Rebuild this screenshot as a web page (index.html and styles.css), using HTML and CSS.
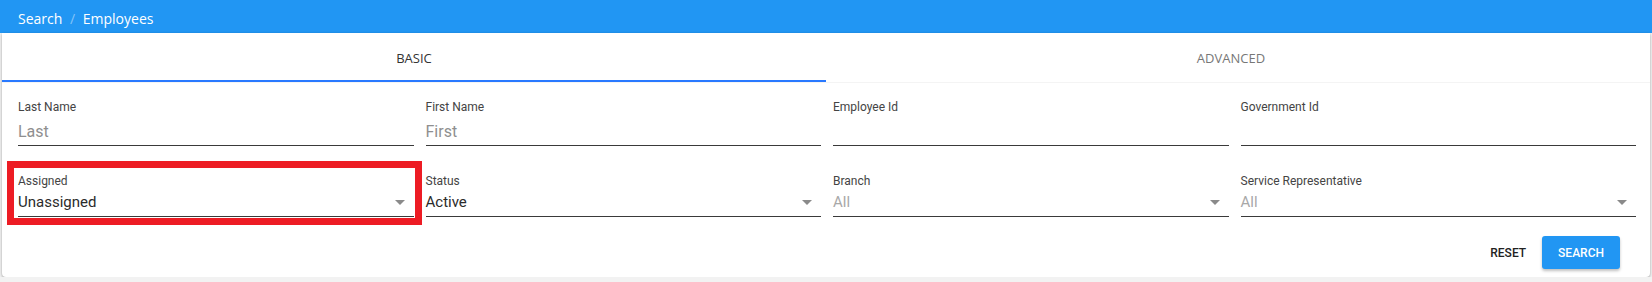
FILE: index.html
```html
<!DOCTYPE html>
<html lang="en">
<head>
    <meta charset="UTF-8" />
    <title>Search Employees</title>
    <link rel="stylesheet" href="styles.css">
</head>
<body>

<!-- breadcrumb bar -->
<div class="topbar">
    <span class="crumb">Search</span>
    <span class="sep">/</span>
    <span class="crumb">Employees</span>
</div>

<div class="card">
    <!-- tabs -->
    <div class="tabs">
        <div class="tab active">BASIC</div>
        <div class="tab">ADVANCED</div>
    </div>

    <!-- search form -->
    <div class="form">
        <div class="field text">
            <label>Last Name</label>
            <div class="value placeholder">Last</div>
        </div>
        <div class="field text">
            <label>First Name</label>
            <div class="value placeholder">First</div>
        </div>
        <div class="field text">
            <label>Employee Id</label>
            <div class="value"></div>
        </div>
        <div class="field text">
            <label>Government Id</label>
            <div class="value"></div>
        </div>

        <div class="field select">
            <span class="highlight"></span>
            <label>Assigned</label>
            <div class="value">Unassigned<span class="arrow"></span></div>
        </div>
        <div class="field select">
            <label>Status</label>
            <div class="value">Active<span class="arrow"></span></div>
        </div>
        <div class="field select">
            <label>Branch</label>
            <div class="value muted">All<span class="arrow"></span></div>
        </div>
        <div class="field select">
            <label>Service Representative</label>
            <div class="value muted">All<span class="arrow"></span></div>
        </div>
    </div>

    <div class="actions">
        <button class="btn flat">RESET</button>
        <button class="btn raised">SEARCH</button>
    </div>
</div>

</body>
</html>
```

FILE: styles.css
```css
body {
    margin: 0;
    background: #f2f2f2;
    font-family: Roboto, 'Liberation Sans', sans-serif;
    color: #212121;
}

.topbar {
    height: 33px;
    line-height: 33px;
    padding: 2px 0 0 18px;
    box-sizing: border-box;
    background: #2196f3;
    color: #fff;
    font-family: 'Open Sans', sans-serif;
    font-size: 14px;
}

.sep {
    color: rgba(255, 255, 255, 0.45);
    margin: 0 4px;
}

.card {
    margin: 0 2px;
    background: #fff;
    border-radius: 0 0 4px 4px;
    box-shadow: 0 1px 3px rgba(0, 0, 0, 0.35);
    padding-bottom: 8px;
}

.tabs {
    display: flex;
    padding-right: 14px;
    border-bottom: 1px solid #f4f4f4;
}

.tab {
    flex: 1;
    height: 49px;
    line-height: 50px;
    text-align: center;
    font-family: 'Open Sans', sans-serif;
    font-size: 13px;
    color: #777;
    border-bottom: 2px solid transparent;
    box-sizing: border-box;
}

.tab.active {
    flex: 0 0 824px;
    color: #333;
    border-bottom-color: #2979ff;
}

.form {
    display: grid;
    grid-template-columns: repeat(4, 1fr);
    column-gap: 12px;
    row-gap: 27px;
    padding: 16px 14px 0 16px;
    align-items: start;
}

.field {
    position: relative;
    border-bottom: 1px solid #3a3a3a;
}

.field label {
    display: block;
    font-size: 12px;
    line-height: 16px;
    color: #444;
}

.field .value {
    position: relative;
    height: 24px;
    line-height: 24px;
}

.field.text .value {
    margin-top: 5px;
    padding-bottom: 1px;
    font-size: 16px;
}

.field.select .value {
    margin-top: 1px;
    padding-bottom: 2px;
    font-size: 15px;
    color: #2b2b2b;
}

.field .value.placeholder {
    color: #8f8f8f;
}

.field .value.muted {
    color: #a8a8a8;
}

.arrow {
    position: absolute;
    right: 9px;
    top: 10px;
    border-left: 5px solid transparent;
    border-right: 5px solid transparent;
    border-top: 5px solid #8a8a8a;
}

/* red annotation round the Assigned field */
.highlight {
    position: absolute;
    left: -11px;
    right: -8px;
    top: -12px;
    bottom: -9px;
    border: 7px solid #ed1c24;
}

.actions {
    display: flex;
    justify-content: flex-end;
    padding: 19px 30px 0 0;
}

.btn {
    height: 33px;
    padding: 0 16px;
    border: none;
    border-radius: 3px;
    font-family: Roboto, sans-serif;
    font-size: 12px;
    font-weight: 500;
    background: none;
    cursor: pointer;
}

.btn.flat {
    color: #222;
}

.btn.raised {
    background: #2196f3;
    color: #fff;
    box-shadow: 0 2px 3px rgba(0, 0, 0, 0.25);
}
```
